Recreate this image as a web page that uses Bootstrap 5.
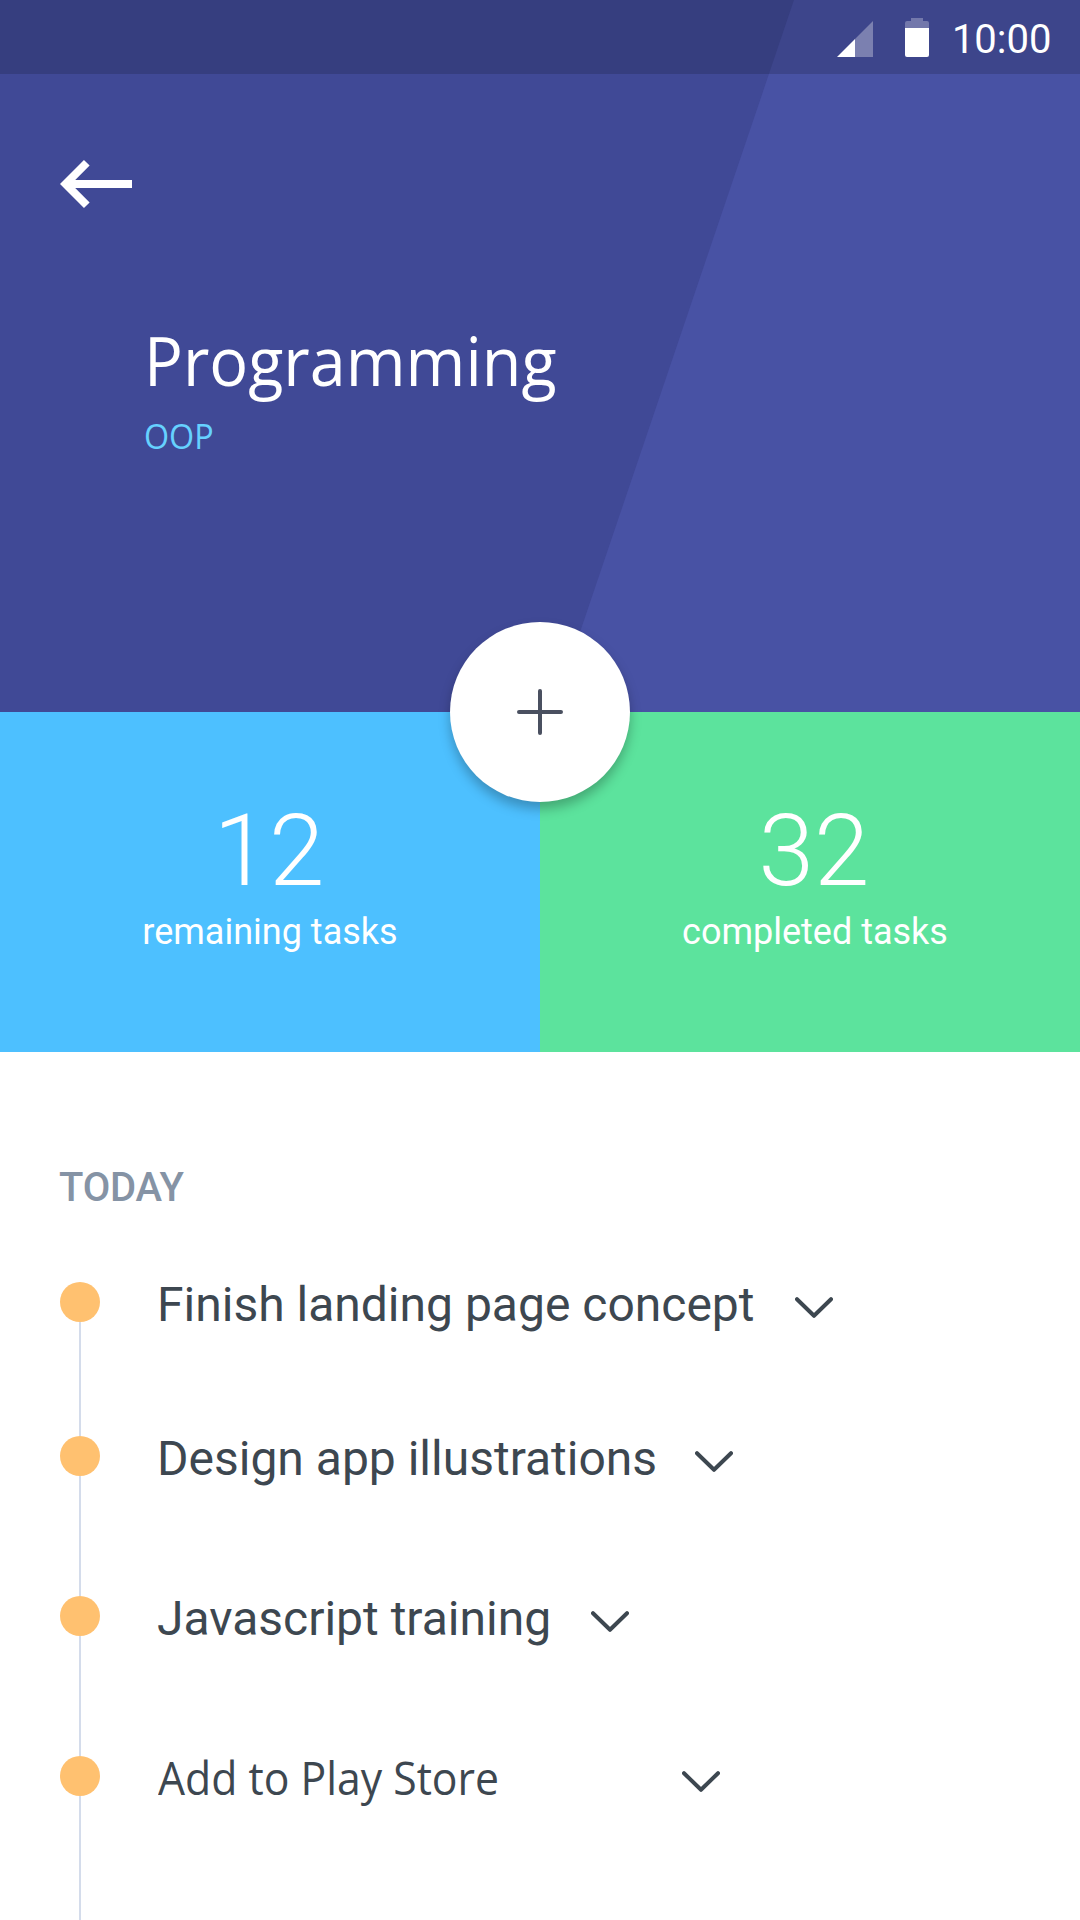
<!DOCTYPE html>
<html lang="en">
<head>
<meta charset="utf-8">
<meta name="viewport" content="width=device-width, initial-scale=1">
<title>Programming</title>
<link rel="stylesheet" href="https://cdn.jsdelivr.net/npm/bootstrap@5.3.0/dist/css/bootstrap.min.css">
<style>
  body { font-family: Roboto, sans-serif; color: #3d4750; background: #fff; height: 1920px; overflow: hidden; }
  svg { display: block; }
  .humanist { font-family: "Open Sans", "Noto Sans", sans-serif; transform-origin: left center; white-space: nowrap; }

  .hero { height: 712px; background: #404996; }
  .status-strip { height: 74px; padding: 0 28.5px 0 0; background: rgba(0, 0, 0, .15); }
  .signal { margin: 5px 0 1px; }
  .battery { margin: 2px 0 1px 32px; }
  .status-clock { font-size: 40px; line-height: 47px; margin: 4.5px 0 0 22.5px; }
  .back-link { margin: 84px 0 0 58px; width: 76px; }
  .hero-title { font-size: 68px; line-height: 93px; font-weight: 400; margin: 103px 0 0 143.7px; transform: scaleX(.951); }
  .hero-sub { font-size: 34px; line-height: 46px; color: #66d1ff; margin: 7px 0 0 144px; transform: scaleX(.95); }

  .stat-tile { height: 340px; padding-top: 88px; }
  .tile-left { background: #4dc0ff; }
  .tile-right { background: #5ce39d; padding-left: 10px; }
  .stat-count { font-size: 100px; line-height: 101px; font-weight: 300; margin-left: -2px; }
  .stat-label { font-size: 36px; line-height: 42px; margin-top: 10px; }
  .fab { width: 180px; height: 180px; z-index: 2; box-shadow: 0 7px 12px rgba(0, 0, 0, .26); border: 0; padding: 0; }

  .agenda { height: 868px; padding: 112px 60px 0; }
  .agenda-head { font-size: 40px; line-height: 47px; font-weight: 500; letter-spacing: -.2px; color: #8593a5; margin: 0 0 71px -1px; }
  .task { height: 160px; }
  .task-first { height: 154px; }
  .task-last { height: 164px; }
  .rail { width: 40px; margin-right: 57px; }
  .dot { width: 40px; height: 40px; background: #ffc170; }
  .stem { width: 2px; background: #d4dceb; }
  .task-name { font-size: 48px; line-height: 57px; margin-top: -6px; white-space: nowrap; }
  .task-wide { width: 485px; }
  .task-wide .humanist { font-size: 46px; line-height: 54px; margin-left: 1px; transform: scaleX(.929); }
  .chev { margin: 15px 0 0 40px; }
  .chev-near { margin-left: 38px; }
</style>
<script src="https://cdn.jsdelivr.net/npm/bootstrap@5.3.0/dist/js/bootstrap.bundle.min.js"></script>
</head>
<body>
<svg class="d-none" xmlns="http://www.w3.org/2000/svg">
  <symbol id="chevron" viewBox="0 0 38 22"><path d="M2 2.2 19 18.8 36 2.2" fill="none" stroke="#3d4750" stroke-width="4" stroke-linecap="round" stroke-linejoin="round"/></symbol>
</svg>

<header class="hero position-relative text-white">
  <svg class="position-absolute top-0 start-0" width="1080" height="712" viewBox="0 0 1080 712"><path d="M794 0H1080V712H553Z" fill="#4852a4"/></svg>
  <div class="position-relative d-flex flex-column align-items-start">
    <div class="status-strip w-100 d-flex justify-content-end align-items-center">
      <svg class="signal" width="36" height="36" viewBox="0 0 36 36"><path d="M36 0V36H18V18Z" fill="#fff" fill-opacity=".32"/><path d="M18 18V36H0Z" fill="#fff"/></svg>
      <svg class="battery" width="24" height="39" viewBox="0 0 24 39"><path d="M6 0H18V3H22Q24 3 24 5V10H0V5Q0 3 2 3H6Z" fill="#fff" fill-opacity=".28"/><path d="M0 10H24V37Q24 39 22 39H2Q0 39 0 37Z" fill="#fff"/></svg>
      <div class="status-clock">10:00</div>
    </div>
    <a class="back-link" href="#" aria-label="Back">
      <svg width="76" height="52" viewBox="0 0 76 52"><path d="M28.8 4.8 7.66 26 28.8 47.2M8 26H74" fill="none" stroke="#fff" stroke-width="8"/></svg>
    </a>
    <h1 class="hero-title humanist">Programming</h1>
    <div class="hero-sub humanist">OOP</div>
  </div>
</header>

<section class="position-relative">
  <div class="row g-0 text-center text-white">
    <div class="col-6 stat-tile tile-left">
      <div class="stat-count">12</div>
      <div class="stat-label">remaining tasks</div>
    </div>
    <div class="col-6 stat-tile tile-right">
      <div class="stat-count">32</div>
      <div class="stat-label">completed tasks</div>
    </div>
  </div>
  <button class="fab position-absolute top-0 start-50 translate-middle rounded-circle bg-white d-flex align-items-center justify-content-center" aria-label="Add task">
    <svg width="46" height="46" viewBox="0 0 46 46"><path d="M23 2V44M2 23H44" stroke="#4a5060" stroke-width="4" stroke-linecap="round"/></svg>
  </button>
</section>

<main class="agenda">
  <h2 class="agenda-head">TODAY</h2>
  <div class="task task-first d-flex align-items-start">
    <div class="rail h-100 d-flex flex-column align-items-center"><span class="dot rounded-circle"></span><span class="stem flex-grow-1"></span></div>
    <div class="task-name">Finish landing page concept</div>
    <svg class="chev" width="38" height="22"><use href="#chevron"/></svg>
  </div>
  <div class="task d-flex align-items-start">
    <div class="rail h-100 d-flex flex-column align-items-center"><span class="dot rounded-circle"></span><span class="stem flex-grow-1"></span></div>
    <div class="task-name">Design app illustrations</div>
    <svg class="chev chev-near" width="38" height="22"><use href="#chevron"/></svg>
  </div>
  <div class="task d-flex align-items-start">
    <div class="rail h-100 d-flex flex-column align-items-center"><span class="dot rounded-circle"></span><span class="stem flex-grow-1"></span></div>
    <div class="task-name">Javascript training</div>
    <svg class="chev" width="38" height="22"><use href="#chevron"/></svg>
  </div>
  <div class="task task-last d-flex align-items-start">
    <div class="rail h-100 d-flex flex-column align-items-center"><span class="dot rounded-circle"></span><span class="stem flex-grow-1"></span></div>
    <div class="task-name task-wide"><div class="humanist">Add to Play Store</div></div>
    <svg class="chev" width="38" height="22"><use href="#chevron"/></svg>
  </div>
</main>
</body>
</html>
